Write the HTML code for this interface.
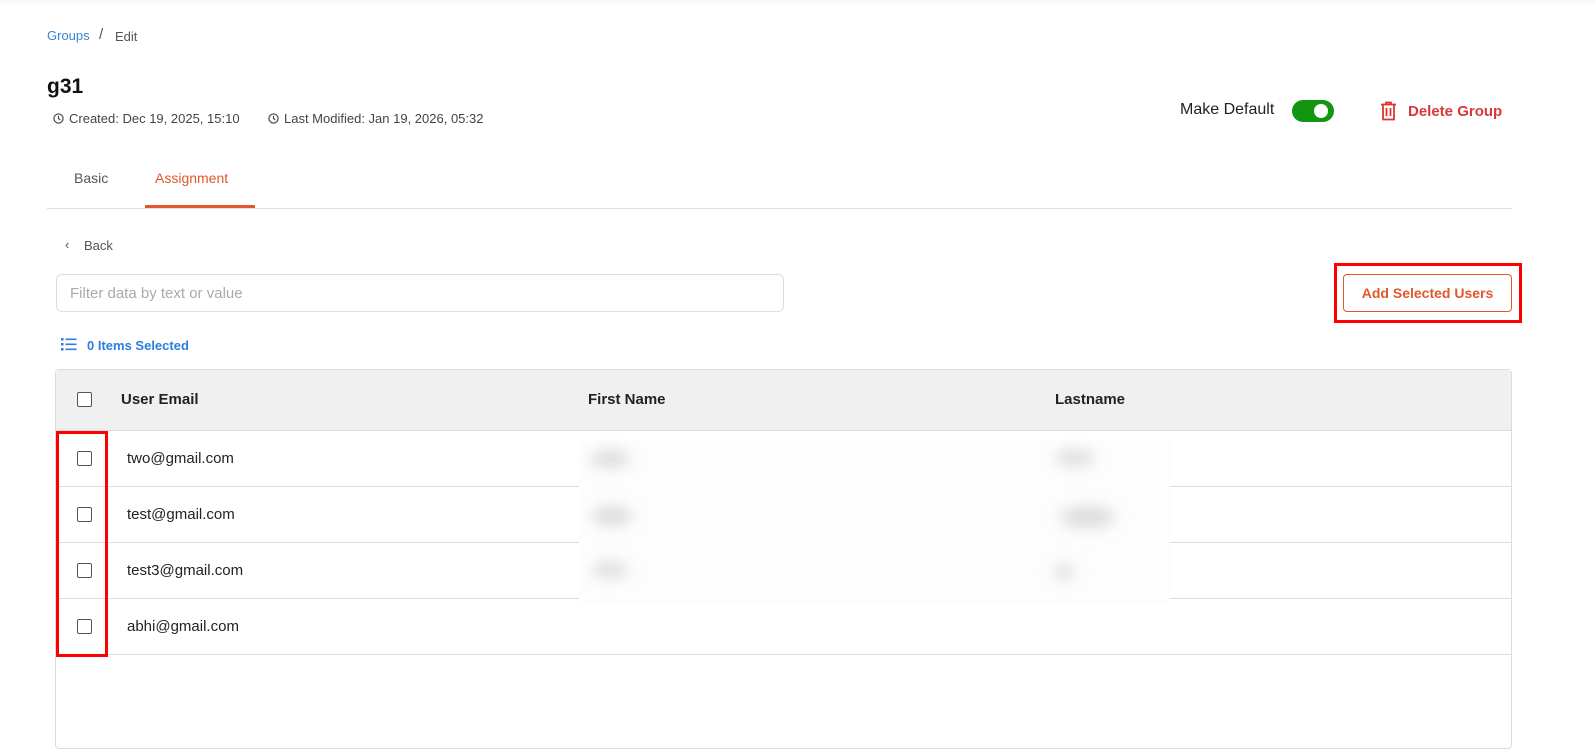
<!DOCTYPE html>
<html><head><style>
*{box-sizing:border-box;margin:0;padding:0}
body{width:1595px;height:743px;background:#fff;font-family:"Liberation Sans",sans-serif;position:relative;overflow:hidden;color:#222}
.a{position:absolute}
.cb{position:absolute;width:15px;height:15px;border:1.6px solid #555;border-radius:2px;background:#fff}
.hl{position:absolute;left:56px;width:1455px;height:1px;background:#ddd}
.td{position:absolute;font-size:15px;color:#222}
.blob{position:absolute;background:#ddd;border-radius:50%;filter:blur(7px)}
</style></head><body>
<div class="a" style="left:0;top:0;width:1595px;height:4px;background:#fafafa"></div>
<div class="a" style="left:47px;top:28px;font-size:13px;color:#3a86d8">Groups</div>
<div class="a" style="left:99px;top:26px;font-size:15px;color:#555">/</div>
<div class="a" style="left:115px;top:29px;font-size:13px;color:#555">Edit</div>
<div class="a" style="left:47px;top:75px;font-size:21px;font-weight:bold;color:#111">g31</div>
<svg class="a" style="left:53px;top:113px" width="11" height="11" viewBox="0 0 12 12"><circle cx="6" cy="6" r="5" fill="none" stroke="#444" stroke-width="1.3"/><path d="M6 3v3l2 1.5" fill="none" stroke="#444" stroke-width="1.2"/></svg>
<div class="a" style="left:69px;top:111px;font-size:13px;color:#444">Created: Dec 19, 2025, 15:10</div>
<svg class="a" style="left:268px;top:113px" width="11" height="11" viewBox="0 0 12 12"><circle cx="6" cy="6" r="5" fill="none" stroke="#444" stroke-width="1.3"/><path d="M6 3v3l2 1.5" fill="none" stroke="#444" stroke-width="1.2"/></svg>
<div class="a" style="left:284px;top:111px;font-size:13px;color:#444">Last Modified: Jan 19, 2026, 05:32</div>
<div class="a" style="left:1180px;top:101px;font-size:16px;color:#222">Make Default</div>
<div class="a" style="left:1292px;top:100px;width:42px;height:22px;border-radius:11px;background:#12960f"></div>
<div class="a" style="left:1314px;top:104px;width:14px;height:14px;border-radius:50%;background:#fff"></div>
<svg class="a" style="left:1380px;top:101px" width="17" height="20" viewBox="0 0 17 20"><path d="M1 3.5h15M6 3.5V1.5h5v2M3 3.5v15h11v-15M6.5 7v8M10.5 7v8" fill="none" stroke="#d33" stroke-width="1.8"/></svg>
<div class="a" style="left:1408px;top:103px;font-size:15px;font-weight:bold;color:#d8383a">Delete Group</div>
<div class="a" style="left:74px;top:170px;font-size:14px;color:#555">Basic</div>
<div class="a" style="left:155px;top:170px;font-size:14px;color:#e0582c">Assignment</div>
<div class="a" style="left:145px;top:205px;width:110px;height:3px;background:#e0582c"></div>
<div class="a" style="left:47px;top:208px;width:1465px;height:1px;background:#ddd"></div>
<div class="a" style="left:65px;top:237px;font-size:13px;color:#555">‹</div>
<div class="a" style="left:84px;top:238px;font-size:13px;color:#555">Back</div>
<div class="a" style="left:56px;top:274px;width:728px;height:38px;border:1px solid #ddd;border-radius:6px"></div>
<div class="a" style="left:70px;top:285px;font-size:15px;color:#aaa">Filter data by text or value</div>
<div class="a" style="left:1334px;top:263px;width:188px;height:60px;border:3px solid #f00"></div>
<div class="a" style="left:1343px;top:274px;width:169px;height:38px;border:1px solid #e0582c;border-radius:4px;font-size:14px;font-weight:bold;color:#e0582c;text-align:center;line-height:36px">Add Selected Users</div>
<svg class="a" style="left:61px;top:338px" width="16" height="13" viewBox="0 0 16 13"><g fill="#2a7de1"><rect x="0" y="0" width="2.5" height="2.5"/><rect x="0" y="5" width="2.5" height="2.5"/><rect x="0" y="10" width="2.5" height="2.5"/><rect x="4.5" y="0.5" width="11" height="1.6"/><rect x="4.5" y="5.5" width="11" height="1.6"/><rect x="4.5" y="10.5" width="11" height="1.6"/></g></svg>
<div class="a" style="left:87px;top:338px;font-size:13px;font-weight:bold;color:#2a7de1">0 Items Selected</div>
<div class="a" style="left:55px;top:369px;width:1457px;height:380px;border:1px solid #ddd;border-radius:4px"></div>
<div class="a" style="left:56px;top:370px;width:1455px;height:60px;background:#f0f0f0"></div>
<div class="cb" style="left:77px;top:392px"></div>
<div class="a" style="left:121px;top:391px;font-size:15px;font-weight:bold">User Email</div>
<div class="a" style="left:588px;top:391px;font-size:15px;font-weight:bold">First Name</div>
<div class="a" style="left:1055px;top:391px;font-size:15px;font-weight:bold">Lastname</div>
<div class="hl" style="top:430px"></div>
<div class="hl" style="top:486px"></div>
<div class="hl" style="top:542px"></div>
<div class="hl" style="top:598px"></div>
<div class="hl" style="top:654px"></div>
<div class="cb" style="left:77px;top:451px"></div><div class="td" style="left:127px;top:450px">two@gmail.com</div>
<div class="cb" style="left:77px;top:507px"></div><div class="td" style="left:127px;top:506px">test@gmail.com</div>
<div class="cb" style="left:77px;top:563px"></div><div class="td" style="left:127px;top:562px">test3@gmail.com</div>
<div class="cb" style="left:77px;top:619px"></div><div class="td" style="left:127px;top:618px">abhi@gmail.com</div>
<div class="a" style="left:579px;top:440px;width:591px;height:163px;background:#fdfdfd"></div>
<div class="blob" style="left:590px;top:450px;width:40px;height:18px"></div>
<div class="blob" style="left:592px;top:506px;width:40px;height:20px"></div>
<div class="blob" style="left:592px;top:562px;width:36px;height:16px"></div>
<div class="blob" style="left:1055px;top:450px;width:40px;height:16px"></div>
<div class="blob" style="left:1060px;top:506px;width:55px;height:22px"></div>
<div class="blob" style="left:1055px;top:564px;width:18px;height:16px"></div>
<div class="a" style="left:56px;top:431px;width:52px;height:226px;border:3px solid #f00"></div>
</body></html>
